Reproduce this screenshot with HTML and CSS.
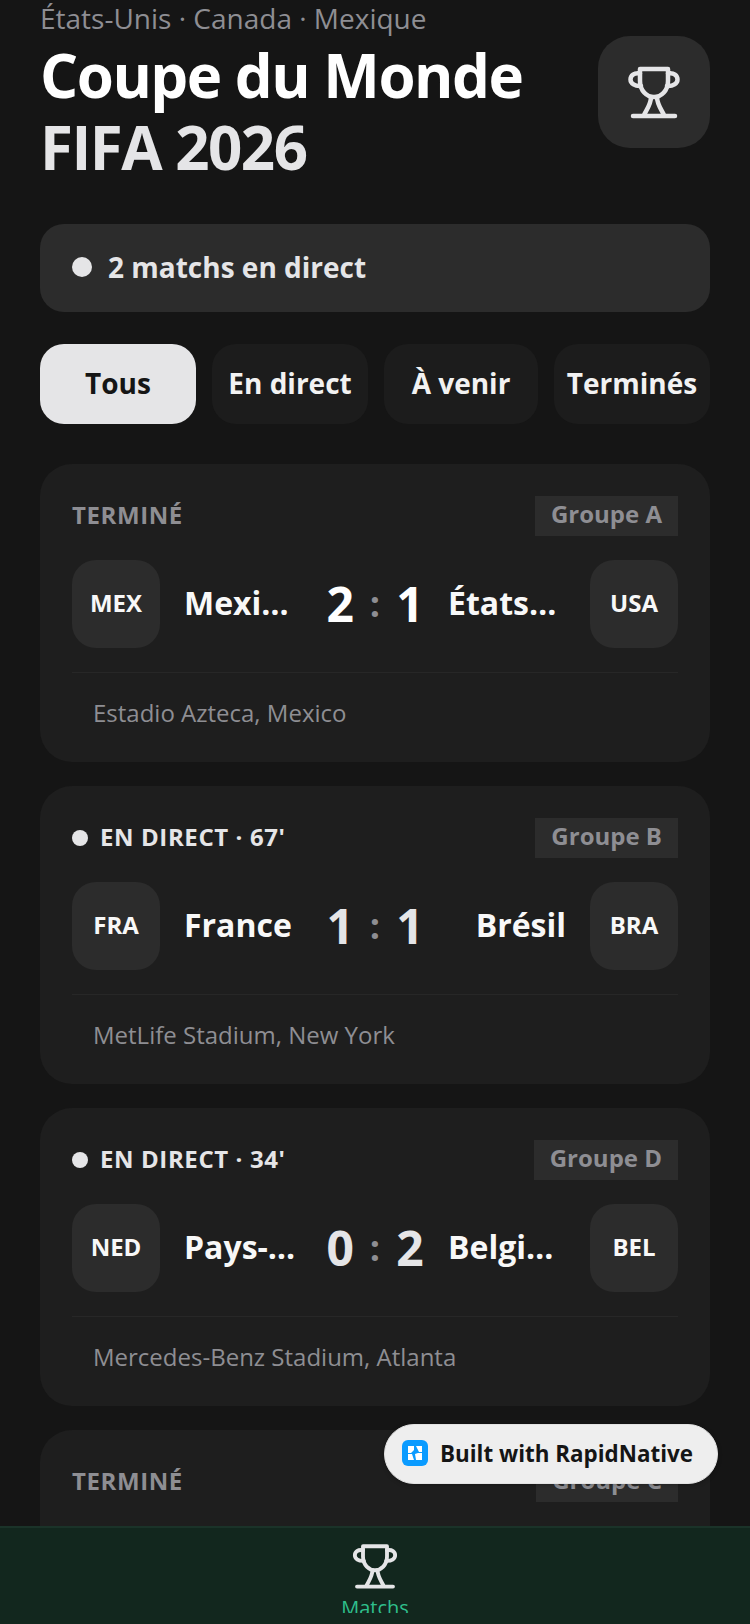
FILE: index.html
```html
<!DOCTYPE html>
<html lang="fr">
<head>
    <meta charset="UTF-8">
    <meta name="viewport" content="width=device-width, initial-scale=1.0">
    <title>Coupe du Monde FIFA 2026</title>
    <link rel="stylesheet" href="styles.css">
</head>
<body>
    <div class="app">
        <main class="content">
            <header class="header">
                <div>
                    <p class="subtitle">États-Unis · Canada · Mexique</p>
                    <h1 class="title">Coupe du Monde<br><span class="title-year">FIFA 2026</span></h1>
                </div>
                <div class="header-icon">
                    <svg class="trophy" width="56" height="56" viewBox="0 0 56 56">
                        <path d="M14 5H42V17C42 27 35 33 28 33C21 33 14 27 14 17Z"/>
                        <path d="M25 33C25 40 21 45 18 51M31 33C31 40 35 45 38 51M7 52H49"/>
                        <path d="M14 9.500C8 8.500 4.500 11.500 4.500 15.500C4.500 19.500 9 22.500 15 22M42 9.500C48 8.500 51.500 11.500 51.500 15.500C51.500 19.500 47 22.500 41 22"/>
                    </svg>
                </div>
            </header>

            <div class="live-bar">
                <span class="dot"></span>
                <span>2 matchs en direct</span>
            </div>

            <div class="tabs">
                <button class="tab tab-active">Tous</button>
                <button class="tab">En direct</button>
                <button class="tab">À venir</button>
                <button class="tab">Terminés</button>
            </div>

            <section class="card">
                <div class="card-top">
                    <span class="status">TERMINÉ</span>
                    <span class="group">Groupe A</span>
                </div>
                <div class="match">
                    <div class="code">MEX</div>
                    <div class="team">Mexique</div>
                    <div class="score score-final"><span>2</span><i>:</i><span>1</span></div>
                    <div class="team team-right">États-Unis</div>
                    <div class="code">USA</div>
                </div>
                <p class="stadium">Estadio Azteca, Mexico</p>
            </section>

            <section class="card">
                <div class="card-top">
                    <span class="status status-live"><span class="dot dot-small"></span>EN DIRECT · 67'</span>
                    <span class="group">Groupe B</span>
                </div>
                <div class="match">
                    <div class="code">FRA</div>
                    <div class="team">France</div>
                    <div class="score"><span>1</span><i>:</i><span>1</span></div>
                    <div class="team team-right">Brésil</div>
                    <div class="code">BRA</div>
                </div>
                <p class="stadium">MetLife Stadium, New York</p>
            </section>

            <section class="card">
                <div class="card-top">
                    <span class="status status-live"><span class="dot dot-small"></span>EN DIRECT · 34'</span>
                    <span class="group">Groupe D</span>
                </div>
                <div class="match">
                    <div class="code">NED</div>
                    <div class="team">Pays-Bas</div>
                    <div class="score"><span>0</span><i>:</i><span>2</span></div>
                    <div class="team team-right">Belgique</div>
                    <div class="code">BEL</div>
                </div>
                <p class="stadium">Mercedes-Benz Stadium, Atlanta</p>
            </section>

            <section class="card">
                <div class="card-top">
                    <span class="status">TERMINÉ</span>
                    <span class="group">Groupe C</span>
                </div>
            </section>
        </main>

        <nav class="tabbar">
            <svg class="trophy" width="48" height="48" viewBox="0 0 56 56">
                <path d="M14 5H42V17C42 27 35 33 28 33C21 33 14 27 14 17Z"/>
                <path d="M25 33C25 40 21 45 18 51M31 33C31 40 35 45 38 51M7 52H49"/>
                <path d="M14 9.500C8 8.500 4.500 11.500 4.500 15.500C4.500 19.500 9 22.500 15 22M42 9.500C48 8.500 51.500 11.500 51.500 15.500C51.500 19.500 47 22.500 41 22"/>
            </svg>
            <div class="tabbar-label">Matchs</div>
        </nav>

        <div class="built-pill">
            <svg width="26" height="26" viewBox="0 0 26 26">
                <rect width="26" height="26" rx="6" fill="#0a9bff"/>
                <path d="M6 6H12V10L9 13H6ZM14 6H20V12H17ZM6 14H10L12 20H6ZM13 14L16 13H20V20H14Z" fill="#fff"/>
            </svg>
            <span>Built with RapidNative</span>
        </div>
    </div>
</body>
</html>
```

FILE: styles.css
```css
* {
    box-sizing: border-box;
}

body {
    margin: 0;
    background-color: #151515;
    font-family: "Open Sans", sans-serif;
}

.app {
    position: relative;
    width: 750px;
    height: 1624px;
    display: flex;
    flex-direction: column;
    overflow: hidden;
}

.content {
    flex: 1;
    min-height: 0;
    overflow: hidden;
    padding: 1px 40px 0;
}

/* header */
.header {
    display: flex;
    justify-content: space-between;
    align-items: center;
}

.subtitle {
    margin: 0;
    font-size: 28px;
    line-height: 35px;
    color: #8e8e93;
}

.title {
    margin: 3px 0 0;
    font-size: 60px;
    line-height: 72px;
    font-weight: 700;
    letter-spacing: -1.5px;
    color: #fff;
}

.title-year {
    color: #e5e5e7;
}

.header-icon {
    width: 112px;
    height: 112px;
    border-radius: 32px;
    background-color: #2c2c2c;
    display: flex;
    justify-content: center;
    align-items: center;
}

.trophy {
    flex: none;
    fill: none;
    stroke: #e5e5e7;
    stroke-width: 4.5;
    stroke-linecap: round;
    stroke-linejoin: round;
}

/* live bar */
.live-bar {
    margin-top: 41px;
    height: 88px;
    padding: 0 32px 2px;
    border-radius: 24px;
    background-color: #2c2c2c;
    display: flex;
    align-items: center;
    gap: 16px;
    font-size: 28px;
    font-weight: 700;
    color: #e5e5e7;
}

.dot {
    width: 20px;
    height: 20px;
    border-radius: 50%;
    background-color: #e5e5e7;
}

.dot-small {
    width: 16px;
    height: 16px;
}

/* filtres */
.tabs {
    margin-top: 32px;
    display: grid;
    grid-template-columns: 156px 156px 154px 156px;
    gap: 16px;
}

.tab {
    height: 80px;
    padding: 0 0 2px;
    border: none;
    border-radius: 24px;
    background-color: #1c1c1c;
    font-family: inherit;
    font-size: 28px;
    font-weight: 700;
    color: #f2f2f2;
}

.tab-active {
    background-color: #e5e5e7;
    color: #151515;
}

/* cartes */
.card {
    margin-top: 24px;
    height: 298px;
    padding: 32px;
    border-radius: 32px;
    background-color: #1e1e1e;
}

.tabs + .card {
    margin-top: 40px;
}

.card-top {
    display: flex;
    justify-content: space-between;
    align-items: center;
    height: 40px;
}

.status {
    display: flex;
    align-items: center;
    gap: 12px;
    padding-bottom: 4px;
    font-size: 24px;
    font-weight: 700;
    letter-spacing: 0.6px;
    color: #8e8e93;
}

.status .dot {
    margin-top: 4px;
}

.status-live {
    color: #e5e5e7;
}

.group {
    height: 40px;
    padding: 0 16px;
    background-color: #2c2c2c;
    font-size: 24px;
    line-height: 36px;
    font-weight: 700;
    color: #8e8e93;
}

.match {
    margin-top: 24px;
    padding-bottom: 24px;
    border-bottom: 1px solid #272727;
    display: flex;
    align-items: center;
}

.code {
    flex: none;
    width: 88px;
    height: 88px;
    padding-bottom: 4px;
    border-radius: 24px;
    background-color: #2c2c2c;
    display: flex;
    justify-content: center;
    align-items: center;
    font-size: 24px;
    font-weight: 700;
    color: #f8f8f8;
}

.team {
    flex: 1;
    min-width: 0;
    margin: 0 23px 0 24px;
    padding-bottom: 4px;
    overflow: hidden;
    white-space: nowrap;
    text-overflow: ellipsis;
    font-size: 32px;
    font-weight: 700;
    color: #f8f8f8;
}

.team-right {
    margin: 0 24px 0 23px;
    text-align: right;
}

.score {
    flex: none;
    width: 100px;
    padding-bottom: 2px;
    display: flex;
    justify-content: center;
    align-items: center;
    gap: 16px;
    font-size: 48px;
    font-weight: 700;
    color: #e5e5e7;
}

.score-final {
    color: #fff;
}

.score i {
    font-style: normal;
    font-size: 36px;
    color: #8e8e93;
}

.stadium {
    margin: 23px 0 0;
    padding-left: 21px;
    font-size: 24px;
    line-height: 34px;
    color: #8e8e93;
}

/* barre du bas */
.tabbar {
    flex: none;
    height: 98px;
    border-top: 2px solid #1b3329;
    background-color: #12271e;
    padding-top: 14px;
    display: flex;
    flex-direction: column;
    align-items: center;
}

.tabbar-label {
    height: 19px;
    margin-top: 4px;
    overflow: hidden;
    font-size: 20px;
    line-height: 28px;
    color: #2fbf8c;
}

.built-pill {
    position: absolute;
    left: 384px;
    top: 1424px;
    width: 334px;
    height: 60px;
    padding: 0 0 2px 17px;
    border-radius: 30px;
    background-color: #eeeeee;
    border: 1px solid #e2e2e2;
    box-shadow: 0 1px 4px rgba(0, 0, 0, 0.25);
    display: flex;
    align-items: center;
    gap: 12px;
    font-size: 22.4px;
    font-weight: 700;
    color: #151515;
}
```
